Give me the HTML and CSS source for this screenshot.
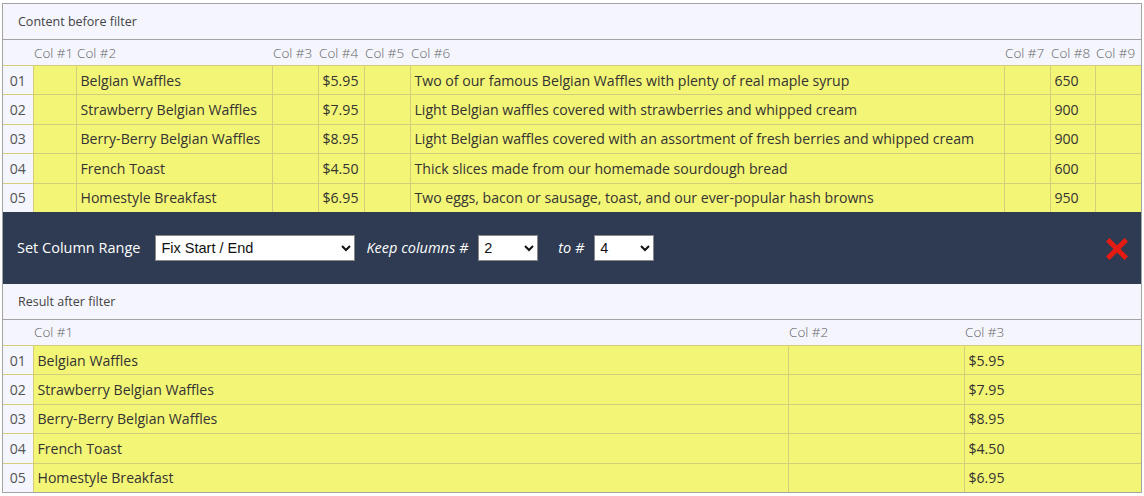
FILE: index.html
```html
<!DOCTYPE html>
<html lang="en">
<head>
    <meta charset="UTF-8">
    <title>Column Range Filter</title>
    <link rel="stylesheet" href="styles.css">
</head>
<body>

    <div class="filter-box">
        <div class="section-title">Content before filter</div>
        <table class="grid">
            <colgroup>
                <col class="c-num"><col class="c-narrow1"><col class="c-name"><col class="c-narrow">
                <col class="c-narrow"><col class="c-narrow"><col class="c-desc"><col class="c-narrow">
                <col class="c-narrow8"><col class="c-narrow">
            </colgroup>
            <thead>
                <tr>
                    <th></th><th>Col #1</th><th>Col #2</th><th>Col #3</th><th>Col #4</th>
                    <th>Col #5</th><th>Col #6</th><th>Col #7</th><th>Col #8</th><th>Col #9</th>
                </tr>
            </thead>
            <tbody>
                <tr>
                    <td class="num">01</td><td></td><td>Belgian Waffles</td><td></td><td>$5.95</td><td></td>
                    <td>Two of our famous Belgian Waffles with plenty of real maple syrup</td><td></td><td>650</td><td></td>
                </tr>
                <tr>
                    <td class="num">02</td><td></td><td>Strawberry Belgian Waffles</td><td></td><td>$7.95</td><td></td>
                    <td>Light Belgian waffles covered with strawberries and whipped cream</td><td></td><td>900</td><td></td>
                </tr>
                <tr>
                    <td class="num">03</td><td></td><td>Berry-Berry Belgian Waffles</td><td></td><td>$8.95</td><td></td>
                    <td>Light Belgian waffles covered with an assortment of fresh berries and whipped cream</td><td></td><td>900</td><td></td>
                </tr>
                <tr>
                    <td class="num">04</td><td></td><td>French Toast</td><td></td><td>$4.50</td><td></td>
                    <td>Thick slices made from our homemade sourdough bread</td><td></td><td>600</td><td></td>
                </tr>
                <tr>
                    <td class="num">05</td><td></td><td>Homestyle Breakfast</td><td></td><td>$6.95</td><td></td>
                    <td>Two eggs, bacon or sausage, toast, and our ever-popular hash browns</td><td></td><td>950</td><td></td>
                </tr>
            </tbody>
        </table>

        <div class="toolbar">
            <span class="label">Set Column Range</span>
            <select class="select select-mode">
                <option selected>Fix Start / End</option>
                <option>Fix Start / Count</option>
                <option>Remove Range</option>
            </select>
            <span class="label label-em">Keep columns #</span>
            <select class="select select-num">
                <option>1</option>
                <option selected>2</option>
                <option>3</option>
                <option>4</option>
            </select>
            <span class="label label-em label-to">to #</span>
            <select class="select select-num">
                <option>2</option>
                <option>3</option>
                <option selected>4</option>
                <option>5</option>
            </select>
            <span class="remove" title="Remove filter">
                <svg width="22" height="22" viewBox="0 0 22 22">
                    <path d="M3.5 3.5 L18.5 18.5 M18.5 3.5 L3.5 18.5" stroke="#e41b12" stroke-width="5" stroke-linecap="square" fill="none"/>
                </svg>
            </span>
        </div>

        <div class="section-title">Result after filter</div>
        <table class="grid">
            <colgroup>
                <col class="c-num"><col class="c-r1"><col class="c-r2"><col class="c-r3">
            </colgroup>
            <thead>
                <tr><th></th><th>Col #1</th><th>Col #2</th><th>Col #3</th></tr>
            </thead>
            <tbody>
                <tr><td class="num">01</td><td>Belgian Waffles</td><td></td><td>$5.95</td></tr>
                <tr><td class="num">02</td><td>Strawberry Belgian Waffles</td><td></td><td>$7.95</td></tr>
                <tr><td class="num">03</td><td>Berry-Berry Belgian Waffles</td><td></td><td>$8.95</td></tr>
                <tr><td class="num">04</td><td>French Toast</td><td></td><td>$4.50</td></tr>
                <tr><td class="num">05</td><td>Homestyle Breakfast</td><td></td><td>$6.95</td></tr>
            </tbody>
        </table>
    </div>

</body>
</html>
```

FILE: styles.css
```css
body {
    margin: 0;
    padding: 0;
    background: #fff;
    font-family: "Open Sans", "Noto Sans", sans-serif;
    color: #333;
}
.filter-box {
    margin: 3px 2px;
    border: 1px solid #a3a3a3;
    background: #f4f5fd;
}
.section-title {
    height: 35px;
    line-height: 36px;
    padding-left: 15px;
    font-size: 12.5px;
    color: #444;
    border-bottom: 1px solid #a3a3a3;
}
.grid {
    width: 100%;
    border-collapse: collapse;
    table-layout: fixed;
}
.c-num { width: 30px; }
.c-narrow1 { width: 43px; }
.c-name { width: 196px; }
.c-narrow { width: 46px; }
.c-narrow8 { width: 45px; }
.c-desc { width: 594px; }
.c-r1 { width: 755px; }
.c-r2 { width: 176px; }
.c-r3 { width: 177px; }
.grid th {
    height: 25px;
    padding: 0 1px;
    text-align: left;
    font-weight: 300;
    font-size: 13.5px;
    color: #666;
    white-space: nowrap;
    overflow: hidden;
    border-bottom: 1px solid #d6cd7c;
}
.grid td {
    height: 28.4px;
    padding: 0 4px;
    font-size: 14.1px;
    color: #333;
    background: #f3f576;
    border: 1px solid #d6cd7c;
    white-space: nowrap;
    overflow: hidden;
}
.grid tr td:last-child {
    border-right: none;
}
.grid tbody tr:last-child td {
    border-bottom: none;
}
.grid td.num {
    background: #f4f5fd;
    border-left: none;
    text-align: center;
    color: #555;
}
.toolbar {
    display: flex;
    align-items: center;
    height: 72px;
    padding: 0 13px 0 14px;
    background: #2e3b52;
    color: #fff;
}
.label {
    font-size: 14.5px;
    margin-right: 15px;
}
.label-em {
    font-style: italic;
    margin-left: 11px;
    margin-right: 10px;
}
.label-to {
    margin-left: 20px;
}
.select {
    height: 26px;
    font-family: "Liberation Sans", Arial, sans-serif;
    font-size: 14.5px;
    color: #111;
    background: #fff;
    border: 1px solid #888;
    border-radius: 0;
    padding: 0 1px;
}
.select-mode { width: 200px; }
.select-num { width: 60px; }
.remove {
    margin-left: auto;
    display: flex;
    align-items: center;
    padding-top: 2px;
}
```
